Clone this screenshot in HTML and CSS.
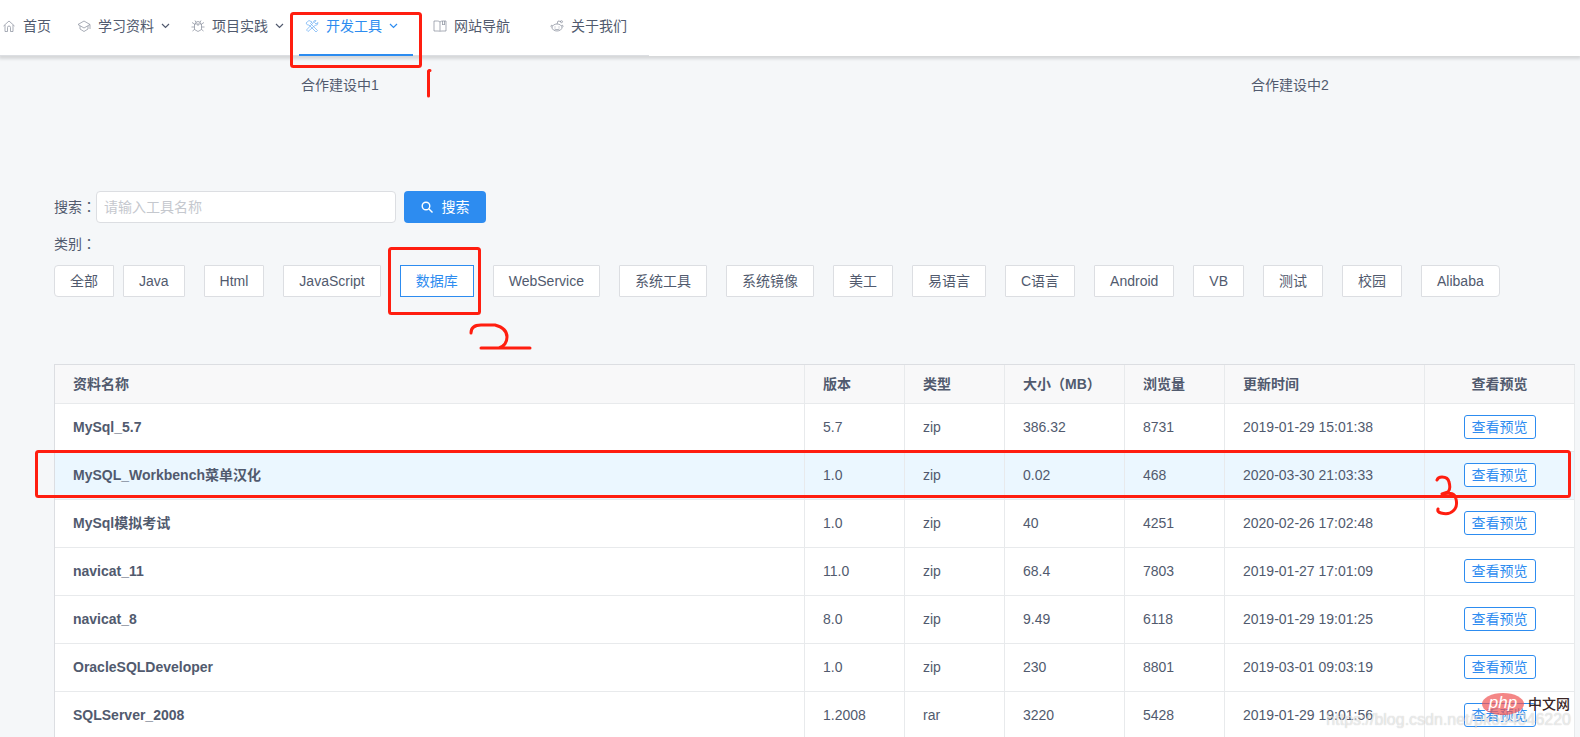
FILE: index.html
```html
<!DOCTYPE html>
<html lang="zh-CN">
<head>
<meta charset="utf-8">
<meta name="viewport" content="width=device-width, initial-scale=1">
<title>开发工具</title>
<link rel="stylesheet" href="styles.css">
</head>
<body>
<header class="header">
  <nav class="menu">
    <a class="item first" href="#">
      <svg class="icon" viewBox="0 0 14 14"><path d="M1.5 7 7 2l5.500 5M3 6v6.500h2.500V8.500q0-1.500 1.500-1.500t1.500 1.500v4H11V6"/></svg>
      <span>首页</span>
    </a>
    <a class="item drop" href="#">
      <svg class="icon" viewBox="0 0 14 14"><path d="M7 2 1 5.500 7 9l6-3.500zM3 7v3l4 2.500 4-2.500V7M13 5.500V10"/></svg>
      <span>学习资料</span>
      <svg class="chevron" viewBox="0 0 9 6"><path d="m1 1 3.500 3.500L8 1"/></svg>
    </a>
    <a class="item drop" href="#">
      <svg class="icon" viewBox="0 0 14 14"><path d="M3.500 5h7v5.500L7 12.500l-3.500-2zM4.500 5q0-2.500 2.500-2.500T9.500 5M4 1.500l1 2M10 1.500l-1 2M1 3.500 3.500 5M13 3.500 10.500 5M.5 8h3M10.500 8h3M1.500 12l2-1.500M12.500 12l-2-1.500M7 5v2"/></svg>
      <span>项目实践</span>
      <svg class="chevron" viewBox="0 0 9 6"><path d="m1 1 3.500 3.500L8 1"/></svg>
    </a>
    <a class="item drop active" href="#" aria-current="page">
      <svg class="icon" viewBox="0 0 14 14"><path d="m1 4 3-2.500L7 3 5.500 4.500l7 7-1.500 1.500-7-7L2.500 6zM13 3.500l-2 1.500-1.500-1.500L11 1.500Q8.500 1 8 4L1.500 11 3 12.500 10 6.500q3 0 3-3"/></svg>
      <span>开发工具</span>
      <svg class="chevron" viewBox="0 0 9 6"><path d="m1 1 3.500 3.500L8 1"/></svg>
    </a>
    <a class="item" href="#">
      <svg class="icon" viewBox="0 0 14 14"><path d="M7 3Q6 2 4.500 2H1v10h4q1.500 0 2 .5.500-.5 2-.5h4V2H9.500Q8 2 7 3v9M9.500 2v4l1-1 1 1V2"/></svg>
      <span>网站导航</span>
    </a>
    <a class="item" href="#">
      <svg class="icon" viewBox="0 0 14 14"><ellipse cx="7" cy="8.500" rx="5" ry="3.500"/><path d="M7 5l1-3 3 .5M2.500 6.500Q1 5.500 1 7.500l1 1M11.500 6.500Q13 5.500 13 7.500l-1 1M4.500 10q2.500 1.500 5 0M5 7.500v1M9 7.500v1"/><circle cx="11.500" cy="2.700" r="1"/></svg>
      <span>关于我们</span>
    </a>
  </nav>
</header>

<main class="page">
  <section class="partners">
    <div class="partner">合作建设中1</div>
    <div class="partner second">合作建设中2</div>
  </section>

  <form class="search">
    <label class="label" for="keyword">搜索<span class="wide" lang="zh-TW">：</span></label>
    <input class="field" id="keyword" type="text" placeholder="请输入工具名称">
    <button class="submit" type="button">
      <svg class="lens" viewBox="0 0 12 12"><circle cx="5" cy="5" r="3.800"/><path d="m8 8 3.500 3.500"/></svg>
      <span>搜索</span>
    </button>
  </form>

  <div class="label">类别<span class="wide" lang="zh-TW">：</span></div>
  <div class="tags">
    <button class="tag all" type="button">全部</button>
    <button class="tag" type="button">Java</button>
    <button class="tag" type="button">Html</button>
    <button class="tag" type="button">JavaScript</button>
    <button class="tag chosen" type="button">数据库</button>
    <button class="tag" type="button">WebService</button>
    <button class="tag" type="button">系统工具</button>
    <button class="tag" type="button">系统镜像</button>
    <button class="tag" type="button">美工</button>
    <button class="tag" type="button">易语言</button>
    <button class="tag" type="button">C语言</button>
    <button class="tag" type="button">Android</button>
    <button class="tag" type="button">VB</button>
    <button class="tag" type="button">测试</button>
    <button class="tag" type="button">校园</button>
    <button class="tag last" type="button">Alibaba</button>
  </div>

  <table class="tools">
    <colgroup>
      <col><col class="w100"><col class="w100"><col class="w120"><col class="w100"><col class="w200"><col class="w150">
    </colgroup>
    <thead>
      <tr><th>资料名称</th><th>版本</th><th>类型</th><th>大小<span class="wide" lang="zh-TW">（</span>MB<span class="wide" lang="zh-TW">）</span></th><th>浏览量</th><th>更新时间</th><th class="action">查看预览</th></tr>
    </thead>
    <tbody>
      <tr><td class="name">MySql_5.7</td><td>5.7</td><td>zip</td><td>386.32</td><td>8731</td><td>2019-01-29 15:01:38</td><td class="action"><button class="view" type="button">查看预览</button></td></tr>
      <tr class="hover"><td class="name">MySQL_Workbench菜单汉化</td><td>1.0</td><td>zip</td><td>0.02</td><td>468</td><td>2020-03-30 21:03:33</td><td class="action"><button class="view" type="button">查看预览</button></td></tr>
      <tr><td class="name">MySql模拟考试</td><td>1.0</td><td>zip</td><td>40</td><td>4251</td><td>2020-02-26 17:02:48</td><td class="action"><button class="view" type="button">查看预览</button></td></tr>
      <tr><td class="name">navicat_11</td><td>11.0</td><td>zip</td><td>68.4</td><td>7803</td><td>2019-01-27 17:01:09</td><td class="action"><button class="view" type="button">查看预览</button></td></tr>
      <tr><td class="name">navicat_8</td><td>8.0</td><td>zip</td><td>9.49</td><td>6118</td><td>2019-01-29 19:01:25</td><td class="action"><button class="view" type="button">查看预览</button></td></tr>
      <tr><td class="name">OracleSQLDeveloper</td><td>1.0</td><td>zip</td><td>230</td><td>8801</td><td>2019-03-01 09:03:19</td><td class="action"><button class="view" type="button">查看预览</button></td></tr>
      <tr><td class="name">SQLServer_2008</td><td>1.2008</td><td>rar</td><td>3220</td><td>5428</td><td>2019-01-29 19:01:56</td><td class="action"><button class="view" type="button">查看预览</button></td></tr>
    </tbody>
  </table>
</main>

<svg class="marks" width="1580" height="737" viewBox="0 0 1580 737" aria-hidden="true">
  <rect x="291.500" y="13.500" width="129" height="53" rx="2"/>
  <path d="M428.500 71v25M430 70.500h-1"/>
  <rect x="389.500" y="248.500" width="90" height="65" rx="2"/>
  <path d="M471 333q0-8 10-8h14q12 3 12 12 0 8-8 11M481 348h49"/>
  <rect x="36.500" y="451.500" width="1533" height="45" rx="2"/>
  <path d="M1437 480q1-3 5-3 6 0 7 5 2 7-1 10l-6 2q13-3 14 5 2 8-3 12-4 4-12 2-4-1-3-4"/>
</svg>

<div class="watermark">https://blog.csdn.net/pk694046220</div>
<div class="brand"><span class="oval">php</span><span>中文网</span></div>
</body>
</html>
```
FILE: styles.css
```css
* {
  box-sizing: border-box;
}

body {
  margin: 0;
  height: 100vh;
  overflow: hidden;
  position: relative;
  background: #f5f7f9;
  color: #515a6e;
  font: 14px/20px "Liberation Sans", "Noto Sans CJK SC", sans-serif;
}

button,
input {
  font: inherit;
  color: inherit;
}

.header {
  height: 56px;
  background: #fff;
  box-shadow: 0 2px 3px 1px rgba(0, 0, 0, 0.13);
  position: relative;
}

.menu {
  display: flex;
  width: max-content;
  height: 56px;
  border-bottom: 1px solid #dcdee2;
}

.item {
  display: flex;
  align-items: center;
  height: 56px;
  padding: 0 20px 4px;
  color: #515a6e;
  text-decoration: none;
}

.first {
  padding-left: 2px;
}

.item:last-child {
  padding-right: 22px;
}

.drop {
  padding-left: 6px;
  padding-right: 15px;
}

.active {
  color: #2d8cf0;
  border-bottom: 2px solid #2d8cf0;
  padding-bottom: 2px;
}

.icon {
  width: 14px;
  height: 14px;
  margin-right: 7px;
  fill: none;
  stroke: currentColor;
  stroke-width: 0.7;
  opacity: 0.7;
}

.chevron {
  width: 9px;
  height: 6px;
  margin-left: 7px;
  fill: none;
  stroke: currentColor;
  stroke-width: 1.2;
}

.page {
  padding: 0 5px 0 54px;
}

.partners {
  display: grid;
  grid-template-columns: 680fr 320fr 580fr;
  margin: 0 -5px 0 -54px;
  padding-top: 19px;
  height: 135px;
  text-align: center;
}

.second {
  grid-column: 3;
}

.search {
  display: flex;
  align-items: center;
  margin-bottom: 10px;
}

.label {
  line-height: 22px;
}

.wide {
  font-family: "Noto Sans CJK TC", sans-serif;
  line-height: 1;
}

.field {
  width: 300px;
  height: 32px;
  padding: 0 7px;
  border: 1px solid #dcdee2;
  border-radius: 4px;
  background: #fff;
}

.field::placeholder {
  color: #c5c8ce;
}

.submit {
  display: flex;
  align-items: center;
  justify-content: center;
  gap: 9px;
  width: 82px;
  height: 32px;
  margin-left: 8px;
  padding: 0;
  border: 0;
  border-radius: 4px;
  background: #2d8cf0;
  color: #fff;
}

.lens {
  width: 12px;
  height: 12px;
  fill: none;
  stroke: currentColor;
  stroke-width: 1.4;
}

.tags {
  display: flex;
  gap: 19px;
  margin: 10px 0 67px;
}

.tag {
  height: 32px;
  padding: 0 15px;
  border: 1px solid #dcdee2;
  border-radius: 1px;
  background: #fff;
  white-space: nowrap;
}

.all {
  margin-right: -10px;
  border-radius: 4px 0 0 4px;
}

.last {
  border-radius: 0 4px 4px 0;
}

.chosen {
  border-color: #2d8cf0;
  border-radius: 0;
  color: #2d8cf0;
}

.tools {
  width: 100%;
  table-layout: fixed;
  border-collapse: separate;
  border-spacing: 0;
  border: 1px solid #dcdee2;
  border-right: 0;
  background: #fff;
}

.w100 {
  width: 100px;
}

.w120 {
  width: 120px;
}

.w150 {
  width: 150px;
}

.w200 {
  width: 200px;
}

.tools th,
.tools td {
  height: 48px;
  padding: 0 0 2px 18px;
  border-right: 1px solid #e8eaec;
  border-bottom: 1px solid #e8eaec;
  text-align: left;
  white-space: nowrap;
}

.tools th {
  height: 39px;
  padding-bottom: 0;
  background: #f8f8f9;
}

.name {
  font-weight: bold;
}

.hover td {
  background: #ebf7ff;
}

.tools .action {
  padding-left: 0;
  text-align: center;
}

.view {
  display: block;
  width: 72px;
  height: 24px;
  margin: 0 auto;
  padding: 0;
  border: 1px solid #2d8cf0;
  border-radius: 3px;
  background: #fff;
  color: #2d8cf0;
  line-height: 20px;
}

.marks {
  position: absolute;
  top: 0;
  left: 0;
  fill: none;
  stroke: #ff1e10;
  stroke-width: 3;
  stroke-linecap: round;
  stroke-linejoin: round;
  pointer-events: none;
}

.watermark {
  position: absolute;
  right: 9px;
  bottom: 7px;
  color: rgba(255, 255, 255, 0.6);
  font-size: 16px;
  line-height: 20px;
  text-shadow: 0 0 1px rgba(0, 0, 0, 0.25);
}

.brand {
  position: absolute;
  right: 10px;
  bottom: 22px;
  display: flex;
  align-items: center;
  gap: 4px;
  color: #3a2626;
  font-weight: 500;
}

.oval {
  width: 42px;
  height: 22px;
  border-radius: 50%;
  background: rgba(240, 82, 82, 0.7);
  color: #fff;
  font-size: 17px;
  font-style: italic;
  line-height: 19px;
  text-align: center;
}
```
